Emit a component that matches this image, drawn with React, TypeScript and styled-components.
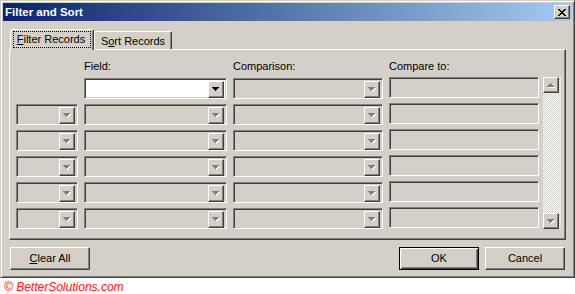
import React from "react";
import styled, { createGlobalStyle, css } from "styled-components";

const GlobalStyle = createGlobalStyle`
  html, body { margin: 0; padding: 0; background: #ffffff; }
  body { font-family: "Liberation Sans", Arial, sans-serif; font-size: 11px; color: #000; }
  * { box-sizing: border-box; }
`;

const FACE = "#D4D0C8";

const raised = css`
  border: 1px solid;
  border-color: #ffffff #404040 #404040 #ffffff;
  box-shadow: inset -1px -1px #808080, inset 1px 1px ${FACE};
`;

const sunken = css`
  border: 1px solid;
  border-color: #808080 #ffffff #ffffff #808080;
  box-shadow: inset 1px 1px #404040, inset -1px -1px ${FACE};
`;

const Window = styled.div`
  width: 575px;
  height: 278px;
  background: ${FACE};
  border: 1px solid;
  border-color: ${FACE} #404040 #404040 ${FACE};
  box-shadow: inset 1px 1px #ffffff, inset -1px -1px #808080;
  padding: 2px;
  display: flex;
  flex-direction: column;
`;

const TitleBar = styled.div`
  height: 18px;
  display: flex;
  align-items: center;
  justify-content: space-between;
  padding: 0 2px 0 2px;
  background: linear-gradient(to right, #0a246a, #a6caf0);
`;

const Title = styled.span`
  color: #ffffff;
  font-weight: bold;
  font-size: 11.5px;
  line-height: 14px;
`;

const CloseButton = styled.div`
  width: 16px;
  height: 14px;
  background: ${FACE};
  ${raised};
  display: flex;
  align-items: center;
  justify-content: center;
  padding-left: 0;
`;

const Body = styled.div`
  flex: 1;
  display: flex;
  flex-direction: column;
  padding: 8px 6px 0 6px;
`;

const TabStrip = styled.div`
  height: 20px;
  display: flex;
  align-items: flex-end;
  padding-left: 1px;
`;

const Tab = styled.div<{ $active?: boolean; $w: number }>`
  width: ${(p) => p.$w}px;
  height: ${(p) => (p.$active ? 21 : 18)}px;
  margin-bottom: ${(p) => (p.$active ? -1 : 0)}px;
  position: relative;
  z-index: ${(p) => (p.$active ? 2 : 1)};
  background: ${FACE};
  border: 1px solid;
  border-bottom: none;
  border-color: #ffffff #404040 transparent #ffffff;
  border-radius: 2px 2px 0 0;
  box-shadow: inset -1px 0 #808080;
  display: flex;
  align-items: flex-start;
  justify-content: center;
  padding-top: ${(p) => (p.$active ? 1 : 2)}px;
  line-height: 13px;
`;

const FocusLabel = styled.span`
  border: 1px dotted #000;
  padding: 1px 5px 1px 3px;
  line-height: 13px;
`;

const PlainLabel = styled.span`
  padding: 1px 0;
  line-height: 13px;
`;

const U = styled.span`
  text-decoration: underline;
`;

const Panel = styled.div`
  height: 191px;
  border: 1px solid;
  border-color: #ffffff #404040 #404040 #ffffff;
  box-shadow: inset -1px -1px #808080;
  padding: 10px 0 0 6px;
`;

const Grid = styled.div`
  display: grid;
  grid-template-columns: 62px 143px 150px 150px 16px;
  grid-template-rows: 13px repeat(6, 21px);
  column-gap: 6px;
  row-gap: 5px;
`;

const ColLabel = styled.div`
  line-height: 13px;
  white-space: nowrap;
`;

const Combo = styled.div<{ $enabled?: boolean }>`
  height: 21px;
  ${sunken};
  background: ${(p) => (p.$enabled ? "#ffffff" : FACE)};
  padding: 2px;
  display: flex;
  justify-content: flex-end;
`;

const DropButton = styled.div`
  width: 16px;
  height: 17px;
  background: ${FACE};
  ${raised};
  display: flex;
  align-items: center;
  justify-content: center;
`;

const TextBox = styled.div`
  height: 21px;
  margin-top: -1px;
  ${sunken};
  background: ${FACE};
`;

const Scrollbar = styled.div`
  grid-column: 5;
  grid-row: 2 / span 6;
  margin-left: -2px;
  margin-top: -1px;
  display: flex;
  flex-direction: column;
  justify-content: space-between;
  background-color: ${FACE};
  background-image: conic-gradient(#ffffff 25%, ${FACE} 0 50%, #ffffff 0 75%, ${FACE} 0);
  background-size: 2px 2px;
`;

const ScrollButton = styled.div`
  width: 16px;
  height: 16px;
  background: ${FACE};
  ${raised};
  display: flex;
  align-items: center;
  justify-content: center;
`;

const ButtonRow = styled.div`
  margin-top: 7px;
  display: flex;
  align-items: center;
  padding: 0 1px;
`;

const PushButton = styled.div<{ $default?: boolean }>`
  width: 80px;
  height: 23px;
  background: ${FACE};
  display: flex;
  align-items: center;
  justify-content: center;
  line-height: 13px;
  ${(p) =>
    p.$default
      ? css`
          border: 1px solid #000;
          box-shadow: inset 1px 1px #ffffff, inset -1px -1px #404040,
            inset 2px 2px ${FACE}, inset -2px -2px #808080;
        `
      : raised}
`;

const Spacer = styled.div`
  flex: 1;
`;

const ButtonGap = styled.div`
  width: 6px;
`;

const Copyright = styled.div`
  padding: 3px 0 0 4px;
  color: #f02828;
  font-style: italic;
  font-size: 12px;
  line-height: 13px;
  text-shadow: 1px 1px rgba(255, 150, 150, 0.45);
`;

const Arrow: React.FC<{ up?: boolean; disabled?: boolean }> = ({ up, disabled }) => {
  const rows = [0, 1, 2, 3];
  const shape = (color: string, dx: number, dy: number) =>
    rows.map((r) => {
      const y = up ? 3 - r : r;
      return <rect key={color + r} x={r + dx} y={y + dy} width={7 - 2 * r} height={1} fill={color} />;
    });
  return (
    <svg width={8} height={5} viewBox="0 0 8 5" shapeRendering="crispEdges">
      {disabled && shape("#ffffff", 1, 1)}
      {shape(disabled ? "#808080" : "#000000", 0, 0)}
    </svg>
  );
};

const CloseGlyph = () => (
  <svg width={8} height={7} viewBox="0 0 8 7" shapeRendering="crispEdges">
    {[0, 1, 2, 3, 4, 5, 6].map((i) => (
      <React.Fragment key={i}>
        <rect x={i} y={i} width={2} height={1} fill="#000" />
        <rect x={6 - i} y={i} width={2} height={1} fill="#000" />
      </React.Fragment>
    ))}
  </svg>
);

const ComboBox: React.FC<{ enabled?: boolean }> = ({ enabled }) => (
  <Combo $enabled={enabled}>
    <DropButton>
      <Arrow disabled={!enabled} />
    </DropButton>
  </Combo>
);

export default function App() {
  const rows = [0, 1, 2, 3, 4, 5];
  return (
    <>
      <GlobalStyle />
      <Window>
        <TitleBar>
          <Title>Filter and Sort</Title>
          <CloseButton>
            <CloseGlyph />
          </CloseButton>
        </TitleBar>
        <Body>
          <TabStrip>
            <Tab $active $w={84}>
              <FocusLabel>
                <U>F</U>ilter Records
              </FocusLabel>
            </Tab>
            <Tab $w={78}>
              <PlainLabel>
                S<U>o</U>rt Records
              </PlainLabel>
            </Tab>
          </TabStrip>
          <Panel>
            <Grid>
              <div />
              <ColLabel>Field:</ColLabel>
              <ColLabel>Comparison:</ColLabel>
              <ColLabel>Compare to:</ColLabel>
              <div />
              {rows.map((r) => (
                <React.Fragment key={r}>
                  {r === 0 ? <div /> : <ComboBox />}
                  <ComboBox enabled={r === 0} />
                  <ComboBox />
                  <TextBox />
                </React.Fragment>
              ))}
              <Scrollbar>
                <ScrollButton>
                  <Arrow up disabled />
                </ScrollButton>
                <ScrollButton>
                  <Arrow disabled />
                </ScrollButton>
              </Scrollbar>
            </Grid>
          </Panel>
          <ButtonRow>
            <PushButton>
              <span>
                <U>C</U>lear All
              </span>
            </PushButton>
            <Spacer />
            <PushButton $default>OK</PushButton>
            <ButtonGap />
            <PushButton>Cancel</PushButton>
          </ButtonRow>
        </Body>
      </Window>
      <Copyright>© BetterSolutions.com</Copyright>
    </>
  );
}
